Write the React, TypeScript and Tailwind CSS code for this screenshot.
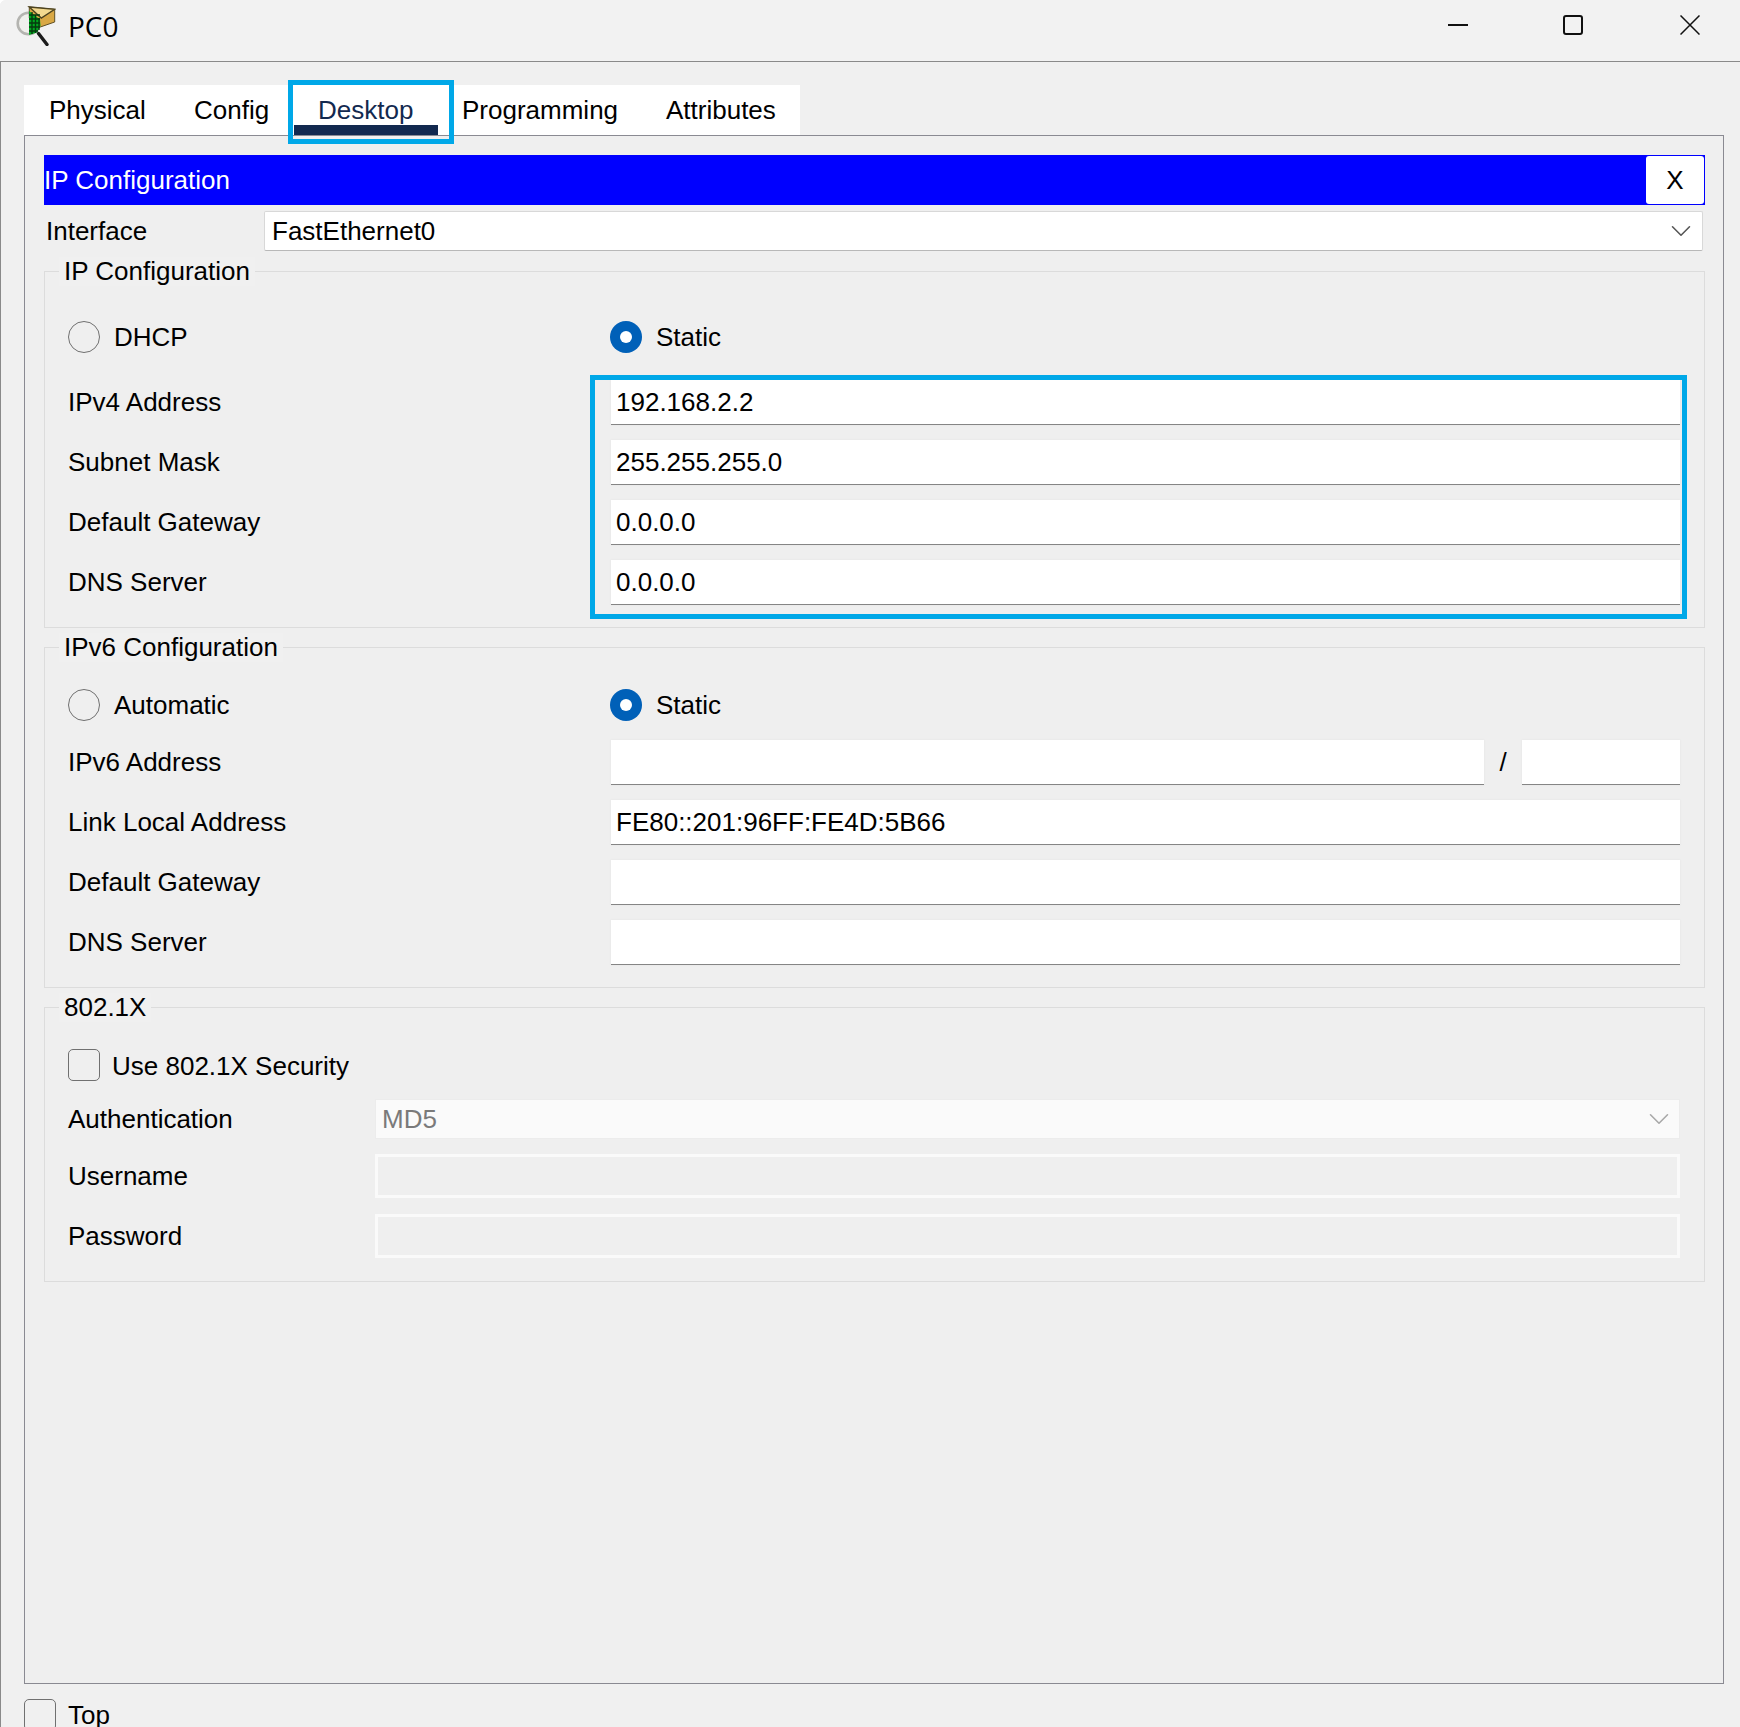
import React from "react";
import { ChevronDown } from "lucide-react";

const Radio = ({ checked, label }: { checked?: boolean; label: string }) => (
  <div className="flex items-center gap-[14px] h-[32px]">
    {checked ? (
      <span className="flex items-center justify-center w-[32px] h-[32px] rounded-full bg-[#0060b8]">
        <span className="w-[12px] h-[12px] rounded-full bg-white"></span>
      </span>
    ) : (
      <span className="w-[32px] h-[32px] rounded-full border-[1.5px] border-[#707070]"></span>
    )}
    <span className="pt-[1px]">{label}</span>
  </div>
);

const Field = ({ value, className = "" }: { value?: string; className?: string }) => (
  <div
    className={`h-[45px] flex items-center pl-[5px] bg-white border-b border-[#858585] shadow-[0_0_2px_#e2e2e2] ${className}`}
  >
    {value}
  </div>
);

const Row = ({ label, children }: { label: string; children: React.ReactNode }) => (
  <div className="grid grid-cols-[543px_1fr] items-center">
    <span>{label}</span>
    {children}
  </div>
);

const Group = ({ title, className, children }: { title: string; className: string; children: React.ReactNode }) => (
  <div className={`relative border border-[#dcdcdc] pl-[23px] pr-[24px] ${className}`}>
    <span className="absolute left-[14px] -top-[15px] px-[5px] bg-[#f0f0f0] leading-[29px]">{title}</span>
    {children}
  </div>
);

const CheckBox = () => (
  <span className="block w-[32px] h-[32px] shrink-0 rounded-[5px] border-[1.5px] border-[#707070]"></span>
);

const AppIcon = () => (
  <svg width="40" height="40" viewBox="0 0 40 40" className="ml-[16px] -mt-[9px]">
    {/* lupa */}
    <circle cx="12.5" cy="17.5" r="10.8" fill="#f0f0ec" stroke="#b4b4b0" strokeWidth="2.6" />
    <path d="M22.5 27.5 L31 38.5" stroke="#1c1c1c" strokeWidth="3.4" strokeLinecap="round" />
    {/* envelope */}
    <path d="M13.3 1 L38.7 3.3 L38.7 16 L24.3 21 L13.3 12 Z" fill="#d9a845" stroke="#5f5026" strokeWidth="1" />
    <path d="M13.3 1 L25.3 12 L38.7 3.3 Z" fill="#f3d98f" stroke="#4e4420" strokeWidth="1.4" />
    {/* grade verde */}
    <path d="M13 5 L24 13.5 L24.5 20 L21 26.5 L13 29 Z" fill="#00a81e" />
    <path
      d="M13 9 H24 M13 13 H24 M13 17 H24 M13 21 H24 M13 25 H22 M16 6 V28 M19.5 9 V27 M23 12 V24"
      stroke="#063a10"
      strokeWidth="1.4"
    />
  </svg>
);

export default function App() {
  return (
    <div
      className="relative flex flex-col h-[1727px] overflow-hidden bg-[#f0f0f0] text-[26px] text-black rounded-tl-[6px]"
      style={{ fontFamily: '"Liberation Sans", Arial, sans-serif' }}
    >
      {/* Barra de titulo */}
      <header className="flex items-center shrink-0 h-[62px] bg-[#f2f2f2] border-b border-[#8a8a8a]">
        <AppIcon />
        <span className="ml-[12px] -mt-[10px] text-[28px]" style={{ fontFamily: '"Open Sans", sans-serif' }}>
          PC0
        </span>
        <div className="ml-auto mr-[40px] flex items-center -mt-[11px]">
          <span className="block w-[20px] h-[2px] bg-[#111111]"></span>
          <span className="block ml-[95px] w-[20px] h-[20px] rounded-[3px] border-2 border-[#111111]"></span>
          <svg width="20" height="20" viewBox="0 0 20 20" className="ml-[97px]">
            <path d="M0.5 0.5 L19.5 19.5 M19.5 0.5 L0.5 19.5" stroke="#111111" strokeWidth="1.5" />
          </svg>
        </div>
      </header>

      <div className="flex flex-col flex-1 min-h-0 border-l border-[#8a8a8a]">
        <div className="flex-1 flex flex-col min-h-0 pl-[23px] pr-[16px] pt-[23px]">
          {/* Abas */}
          <nav className="relative flex items-center shrink-0 w-[776px] h-[50px] bg-white">
            <span className="absolute left-[25px]">Physical</span>
            <span className="absolute left-[170px]">Config</span>
            <span className="absolute left-[294px] text-[#12294f]">Desktop</span>
            <span className="absolute left-[270px] top-[40px] w-[144px] h-[10px] bg-[#12294f]"></span>
            <span className="absolute left-[264px] -top-[5px] w-[166px] h-[64px] border-[5px] border-[#00a8e8]"></span>
            <span className="absolute left-[438px]">Programming</span>
            <span className="absolute left-[642px]">Attributes</span>
          </nav>

          {/* Painel Desktop */}
          <main className="flex-1 min-h-0 border border-[#8a8a92] bg-[#efefef] pl-[19px] pr-[18px] pt-[19px]">
            <div className="flex items-center justify-end h-[50px] bg-[#0000ff] text-white relative">
              <span className="absolute left-0">IP Configuration</span>
              <button className="flex items-center justify-center w-[58px] h-[48px] mr-px bg-white text-black rounded-[3px]">
                X
              </button>
            </div>

            <div className="flex items-center h-[40px] mt-[6px] pl-[2px]">
              <span className="w-[218px]">Interface</span>
              <div className="flex items-center justify-between w-[1439px] h-[40px] pl-[7px] pr-[4px] bg-white border border-[#d8d8d8] border-b-[#b8b8b8] rounded-[2px]">
                <span>FastEthernet0</span>
                <ChevronDown size={34} strokeWidth={1.1} color="#555555" />
              </div>
            </div>

            <Group title="IP Configuration" className="mt-[20px] h-[357px] pt-[49px]">
              <div className="grid grid-cols-[542px_1fr]">
                <Radio label="DHCP" />
                <Radio checked label="Static" />
              </div>
              <div className="relative flex flex-col gap-[15px] mt-[27px]">
                <Row label="IPv4 Address">
                  <Field value="192.168.2.2" />
                </Row>
                <Row label="Subnet Mask">
                  <Field value="255.255.255.0" />
                </Row>
                <Row label="Default Gateway">
                  <Field value="0.0.0.0" />
                </Row>
                <Row label="DNS Server">
                  <Field value="0.0.0.0" />
                </Row>
                <span className="absolute left-[522px] -top-[5px] right-[-7px] h-[244px] border-[5px] border-[#00a8e8]"></span>
              </div>
            </Group>

            <Group title="IPv6 Configuration" className="mt-[19px] h-[341px] pt-[41px]">
              <div className="grid grid-cols-[542px_1fr]">
                <Radio label="Automatic" />
                <Radio checked label="Static" />
              </div>
              <div className="flex flex-col gap-[15px] mt-[19px]">
                <Row label="IPv6 Address">
                  <div className="flex items-center">
                    <Field className="w-[873px]" />
                    <span className="w-[38px] text-center">/</span>
                    <Field className="flex-1" />
                  </div>
                </Row>
                <Row label="Link Local Address">
                  <Field value="FE80::201:96FF:FE4D:5B66" />
                </Row>
                <Row label="Default Gateway">
                  <Field />
                </Row>
                <Row label="DNS Server">
                  <Field />
                </Row>
              </div>
            </Group>

            <Group title="802.1X" className="mt-[19px] h-[275px] pt-[41px]">
              <div className="flex items-center gap-[12px] h-[32px]">
                <CheckBox />
                <span className="pt-[2px]">Use 802.1X Security</span>
              </div>
              <div className="grid grid-cols-[307px_1fr] items-center mt-[18px]">
                <span>Authentication</span>
                <div className="flex items-center justify-between h-[40px] pl-[6px] pr-[3px] bg-[#fafafa] border border-[#ececec] text-[#7a7a7a]">
                  <span>MD5</span>
                  <ChevronDown size={34} strokeWidth={1.1} color="#a8a8a8" />
                </div>
              </div>
              <div className="grid grid-cols-[307px_1fr] items-center mt-[15px]">
                <span>Username</span>
                <div className="h-[44px] border-[3px] border-[#fafafa]"></div>
              </div>
              <div className="grid grid-cols-[307px_1fr] items-center mt-[16px]">
                <span>Password</span>
                <div className="h-[44px] border-[3px] border-[#fafafa]"></div>
              </div>
            </Group>
          </main>
        </div>

        {/* Rodape */}
        <div className="flex items-start shrink-0 h-[43px] pl-[23px] pt-[15px] gap-[12px]">
          <CheckBox />
          <span className="leading-[32px]">Top</span>
        </div>
      </div>
    </div>
  );
}
